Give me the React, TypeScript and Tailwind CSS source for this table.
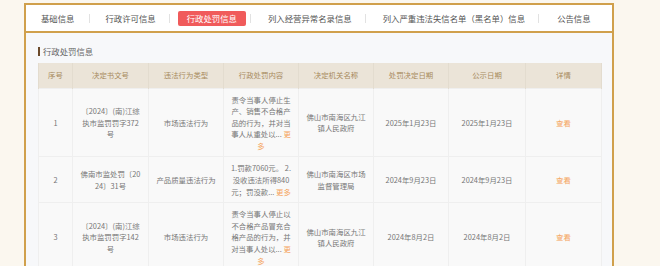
import { Fragment } from 'react'

const FONT = { fontFamily: '"Noto Sans CJK SC", "Noto Sans", "Liberation Sans", sans-serif' }

// 标签栏：文字位置按截图量出来，激活项只是背景向两边各扩 9px
const TABS = [
  { label: '基础信息', cls: 'ml-[15px] mr-[14px]' },
  { label: '行政许可信息', cls: 'ml-[16px] mr-[13px]' },
  { label: '行政处罚信息', cls: 'ml-[8px] mr-[4px] px-[9px] h-[15px] rounded-[2px] bg-[#f05b5b] text-white', active: true },
  { label: '列入经营异常名录信息', cls: 'ml-[17px] mr-[13px]' },
  { label: '列入严重违法失信名单（黑名单）信息', cls: 'ml-[17px] mr-[13px]' },
  { label: '公告信息', cls: 'ml-[18px]' },
]

const HEADS = ['序号', '决定书文号', '违法行为类型', '行政处罚内容', '决定机关名称', '处罚决定日期', '公示日期', '详情']
const WIDTHS = [34, 76, 75, 75, 75, 75, 77, 76]

type Row = {
  no: string
  doc: string[]
  type: string
  // 最后一行末尾接「更」，再单独一行「多」
  content: string[]
  split: boolean
  org: string[]
  date: string
}

const ROWS: Row[] = [
  {
    no: '1',
    doc: ['〔2024〕(南)江综', '执市监罚罚字372', '号'],
    type: '市场违法行为',
    content: ['责令当事人停止生', '产、销售不合格产', '品的行为，并对当', '事人从重处以...'],
    split: true,
    org: ['佛山市南海区九江', '镇人民政府'],
    date: '2025年1月23日',
  },
  {
    no: '2',
    doc: ['佛南市监处罚〔20', '24〕31号'],
    type: '产品质量违法行为',
    content: ['1.罚款7060元。 2.', '没收违法所得840', '元；罚没款...'],
    split: false,
    org: ['佛山市南海区市场', '监督管理局'],
    date: '2024年9月23日',
  },
  {
    no: '3',
    doc: ['〔2024〕(南)江综', '执市监罚罚字142', '号'],
    type: '市场违法行为',
    content: ['责令当事人停止以', '不合格产品冒充合', '格产品的行为，并', '对当事人处以...'],
    split: true,
    org: ['佛山市南海区九江', '镇人民政府'],
    date: '2024年8月2日',
  },
]

function Lines({ lines }: { lines: string[] }) {
  return (
    <>
      {lines.map((l, i) => (
        <Fragment key={i}>
          {i > 0 && <br />}
          {l}
        </Fragment>
      ))}
    </>
  )
}

const td = 'border border-[#efefef] bg-[#f9f9f9] px-[4px] py-[5px] text-center align-middle'

export default function App() {
  return (
    <div className="min-h-screen bg-[#fbf7ef] pl-[24px] pt-[3px]" style={FONT}>
      <div className="w-[590px] border-2 border-b-0 border-[#d0a04c]">
        <div className="flex h-[28px] items-center bg-white text-[8.4px] text-[#555] border-b-2 border-[#d0a04c]">
          {TABS.map((t, i) => (
            <Fragment key={t.label}>
              {i > 0 && <span className="h-[9px] w-px bg-[#e2e2e2]" />}
              <span className={`flex items-center whitespace-nowrap leading-[15px] ${t.cls}`}>{t.label}</span>
            </Fragment>
          ))}
        </div>

        <div className="bg-[#f7f8fa] pl-[12px] pr-[11px] pt-[12px] h-[240px]">
          <div className="flex items-center text-[8.4px] leading-[12px] text-[#666]">
            <span className="mr-[3px] h-[9px] w-[2px] bg-[#6b4a2b]" />
            行政处罚信息
          </div>

          <table className="mt-[6px] w-[563px] table-fixed border-collapse text-[7.4px] leading-[11.6px] text-[#777]">
            <colgroup>
              {WIDTHS.map((w, i) => (
                <col key={i} style={{ width: w }} />
              ))}
            </colgroup>
            <thead>
              <tr className="h-[25px] bg-[#ebe4d8] text-[#a88b5e]">
                {HEADS.map((h) => (
                  <th key={h} className="border-x border-[#e3dccf] font-normal">
                    {h}
                  </th>
                ))}
              </tr>
            </thead>
            <tbody>
              {ROWS.map((r) => (
                <tr key={r.no}>
                  <td className={td}>{r.no}</td>
                  <td className={td}>
                    <Lines lines={r.doc} />
                  </td>
                  <td className={td}>{r.type}</td>
                  <td className={td}>
                    <Lines lines={r.content} />
                    {r.split ? (
                      <>
                        <span className="text-[#f5a45c]"> 更</span>
                        <br />
                        <span className="text-[#f5a45c]">多</span>
                      </>
                    ) : (
                      <span className="text-[#f5a45c]"> 更多</span>
                    )}
                  </td>
                  <td className={td}>
                    <Lines lines={r.org} />
                  </td>
                  <td className={td}>{r.date}</td>
                  <td className={td}>{r.date}</td>
                  <td className={`${td} text-[#f5a45c]`}>查看</td>
                </tr>
              ))}
            </tbody>
          </table>
        </div>
      </div>
    </div>
  )
}
